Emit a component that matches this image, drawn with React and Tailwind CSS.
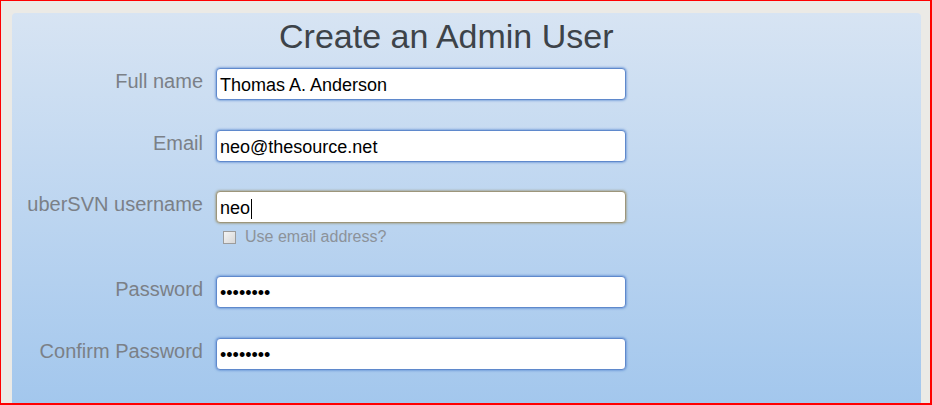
import React from 'react'

const font = { fontFamily: '"Liberation Sans", Arial, sans-serif' }

function Field({ label, value, focused, caret }) {
  return (
    <div className="grid grid-cols-[191px_410px] gap-x-[13px]">
      <div className="pt-[2px] text-right text-[20px] leading-[23px] text-[#7b8087]">{label}</div>
      <div
        className={
          'flex h-[32px] items-center rounded-[4px] border bg-white pl-[3px] pt-[3px] text-[18px] text-black ' +
          (focused
            ? 'border-[#9d967b] shadow-[0_0_2px_1px_rgba(150,140,100,0.55)]'
            : 'border-[#5f89cc] shadow-[0_0_2px_1px_rgba(80,130,205,0.55)]')
        }
      >
        <span>{value}</span>
        {caret && <span className="ml-px h-[20px] w-px bg-black" />}
      </div>
    </div>
  )
}

export default function App() {
  return (
    <div
      style={font}
      className="box-border flex h-[405px] w-[932px] flex-col overflow-hidden border-t border-l border-r-2 border-b-2 border-[#ff0000] bg-[#ebeae6] pl-[11px] pt-[12px] pr-[9px]"
    >
      <div className="flex-1 rounded-t-[4px] bg-linear-to-b from-[#d7e4f3] to-[#a3c7ed] pt-[3px]">
        <h1 className="pl-[267px] text-[34px] leading-[40px] text-[#3d4349]">Create an Admin User</h1>

        <div className="mt-[12px] flex flex-col">
          <Field label="Full name" value="Thomas A. Anderson" />
          <div className="mt-[30px]">
            <Field label="Email" value="neo@thesource.net" />
          </div>
          <div className="mt-[29px]">
            <Field label="uberSVN username" value="neo" focused caret />
          </div>

          {/* use email checkbox */}
          <div className="mt-[5px] grid grid-cols-[191px_410px] gap-x-[13px]">
            <div />
            <label className="flex h-[18px] items-center pl-[7px] text-[16px] text-[#8c929a]">
              <span className="h-[13px] w-[13px] border border-[#9c9c9c] bg-linear-to-br from-[#f4f4f4] to-[#d8d8d8]" />
              <span className="ml-[9px]">Use email address?</span>
            </label>
          </div>

          <div className="mt-[30px]">
            <Field label="Password" value="••••••••" />
          </div>
          <div className="mt-[30px]">
            <Field label="Confirm Password" value="••••••••" />
          </div>
        </div>
      </div>
    </div>
  )
}
